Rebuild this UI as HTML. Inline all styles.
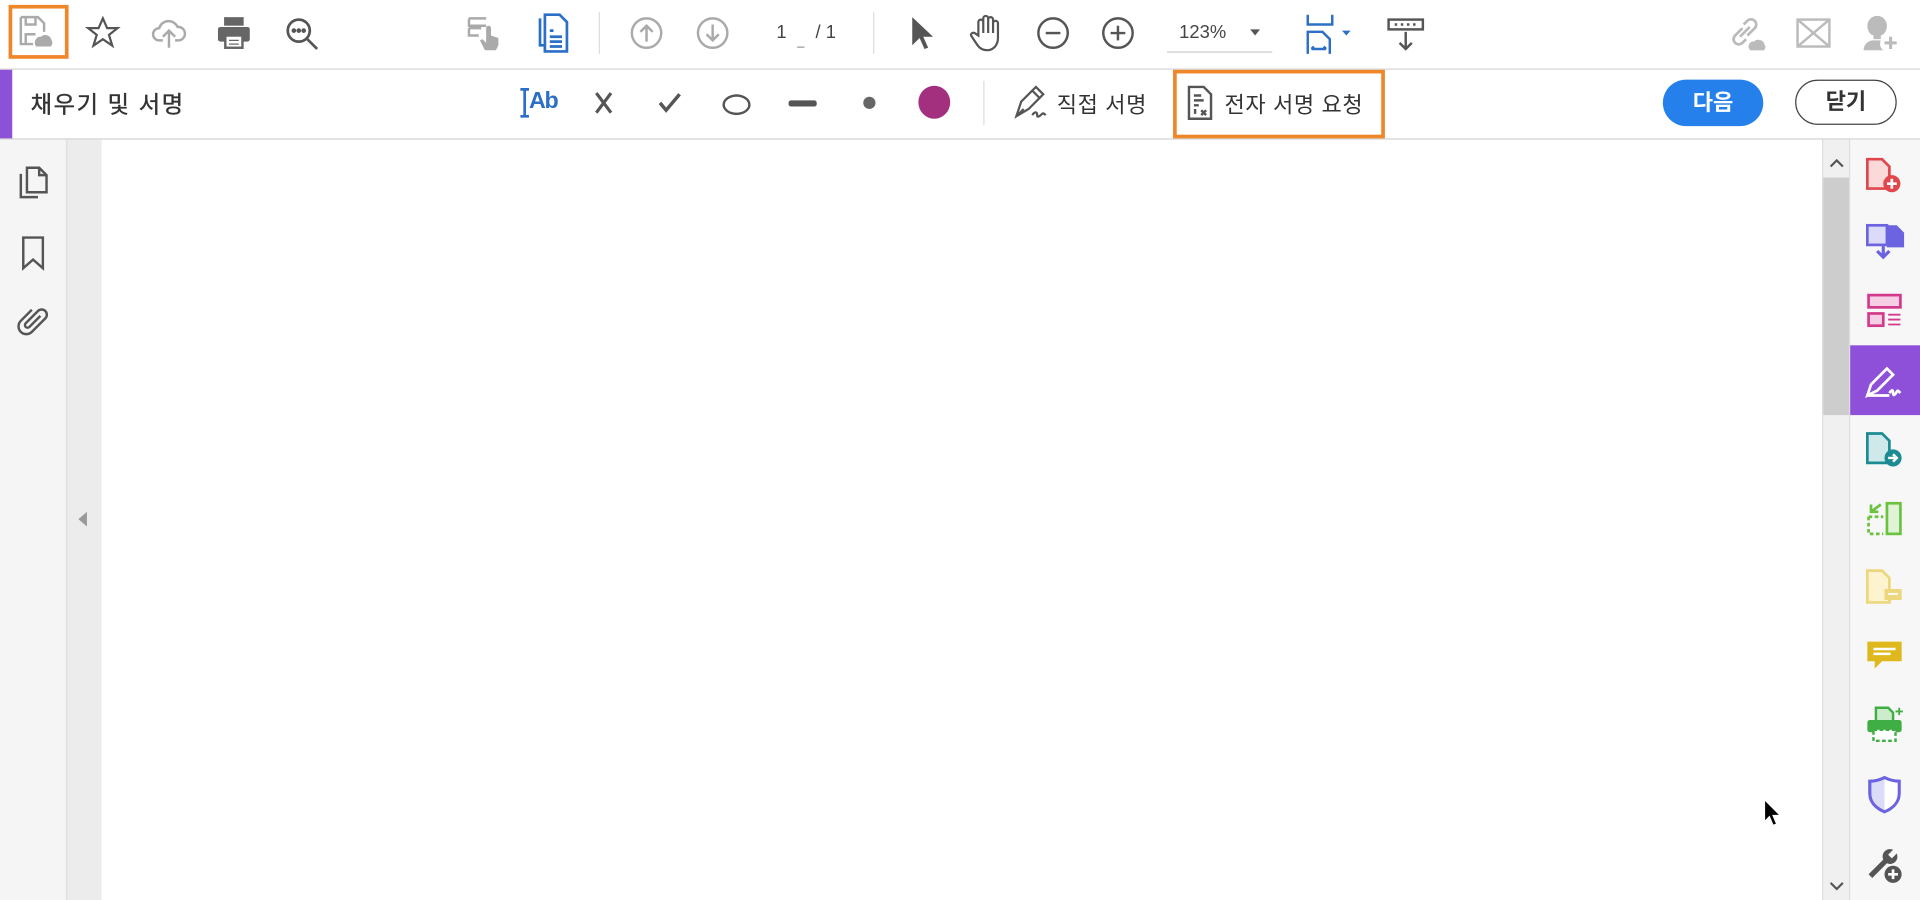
<!DOCTYPE html>
<html><head><meta charset="utf-8"><style>
html,body{margin:0;padding:0;width:1920px;height:899px;overflow:hidden;background:#fff;}
#w{position:absolute;left:0;top:0;width:1568px;height:735px;transform:scale(1.22449);transform-origin:0 0;font-family:"Liberation Sans","Noto Sans CJK KR",sans-serif;}
.a{position:absolute;}
svg{position:absolute;overflow:visible;}
.t{font-size:18px;color:#333;}
</style></head><body><div id="w">
<!-- top toolbar -->
<div class="a" style="left:0;top:0;width:1568px;height:56px;background:#fff;border-bottom:1px solid #d0d0d0"></div>
<div class="a" style="left:7px;top:4px;width:43px;height:38px;border:3px solid #f0862a"></div>
<svg style="left:15px;top:12px" width="30" height="30" viewBox="0 0 30 30" fill="none" stroke="#aaa" stroke-width="2"><path d="M2 2h14l5 5v7M2 2v22h10M6 2v6h8V2M6 24v-8h8"/><path d="M15 25a4 4 0 0 1 4-6a4 4 0 0 1 7 2a3 3 0 0 1 0 4z" fill="#aaa"/></svg>
<svg style="left:70px;top:13px" width="28" height="28" viewBox="0 0 28 28" fill="none" stroke="#555" stroke-width="1.8"><path d="M14 2l3.5 8h8.5l-7 5.5 2.7 8.8L14 19l-7.7 5.3 2.7-8.8-7-5.5h8.5z"/></svg>
<svg style="left:124px;top:13px" width="28" height="28" viewBox="0 0 28 28" fill="none" stroke="#aaa" stroke-width="2"><path d="M9 20H6a5 5 0 0 1 0-10a8 8 0 0 1 15-1a5 5 0 0 1 1 11h-3M14 26V12M9 17l5-5 5 5"/></svg>
<svg style="left:177px;top:13px" width="28" height="28" viewBox="0 0 28 28"><rect x="6" y="1" width="16" height="7" fill="#666"/><rect x="1" y="9" width="26" height="12" rx="2" fill="#666"/><rect x="7" y="16" width="14" height="10" fill="#fff" stroke="#666" stroke-width="2"/><path d="M10 20h8M10 23h8" stroke="#666"/></svg>
<svg style="left:232px;top:13px" width="30" height="30" viewBox="0 0 30 30" fill="none" stroke="#555" stroke-width="2.2"><circle cx="12" cy="12" r="9"/><path d="M19 19l8 8"/><circle cx="8" cy="12" r=".8" fill="#555"/><circle cx="12" cy="12" r=".8" fill="#555"/><circle cx="16" cy="12" r=".8" fill="#555"/></svg>
<svg style="left:380px;top:11px" width="32" height="32" viewBox="0 0 32 32" fill="none" stroke="#aaa" stroke-width="2"><path d="M3 4h14M3 4v6h14M3 12h10M3 12v6h8"/><path d="M16 30l-4-8 2-1 3 3V12a2 2 0 0 1 4 0v6l6 2v6l-2 4z" fill="#aaa" stroke="none"/></svg>
<svg style="left:437px;top:11px" width="28" height="32" viewBox="0 0 28 32" fill="none" stroke="#2c6fc6" stroke-width="2.2"><path d="M4 4v22h3"/><path d="M8 1h12l6 6v24H8z" fill="#fff"/><path d="M12 14h3M12 19h10M12 23h10M12 27h10"/></svg>
<div class="a" style="left:489px;top:10px;width:1px;height:34px;background:#ddd"></div>
<svg style="left:514px;top:13px" width="28" height="28" viewBox="0 0 28 28" fill="none" stroke="#aaa" stroke-width="2"><circle cx="14" cy="14" r="12"/><path d="M14 21V8M9 13l5-5 5 5"/></svg>
<svg style="left:568px;top:13px" width="28" height="28" viewBox="0 0 28 28" fill="none" stroke="#aaa" stroke-width="2"><circle cx="14" cy="14" r="12"/><path d="M14 7v13M9 15l5 5 5-5"/></svg>
<div class="a" style="left:634px;top:18px;font-size:15px;color:#444;">1</div>
<div class="a" style="left:651px;top:38px;width:6px;height:1px;background:#999"></div>
<div class="a" style="left:666px;top:18px;font-size:15px;color:#444;">/ 1</div>
<div class="a" style="left:713px;top:10px;width:1px;height:34px;background:#ddd"></div>
<svg style="left:742px;top:13px" width="22" height="28" viewBox="0 0 22 28"><path d="M3 1v23l6-6 4 9 3-1-4-9h8z" fill="#555"/></svg>
<svg style="left:791px;top:11px" width="30" height="32" viewBox="0 0 30 32" fill="none" stroke="#555" stroke-width="1.8"><path d="M8 18V7a2 2 0 0 1 4 0v9V4a2 2 0 0 1 4 0v12V5a2 2 0 0 1 4 0v11V8a2 2 0 0 1 4 0v12c0 6-4 10-9 10s-7-3-9-6l-4-6a2 2 0 0 1 3-2z"/></svg>
<svg style="left:846px;top:13px" width="28" height="28" viewBox="0 0 28 28" fill="none" stroke="#555" stroke-width="2"><circle cx="14" cy="14" r="12"/><path d="M8 14h12"/></svg>
<svg style="left:899px;top:13px" width="28" height="28" viewBox="0 0 28 28" fill="none" stroke="#555" stroke-width="2"><circle cx="14" cy="14" r="12"/><path d="M8 14h12M14 8v12"/></svg>
<div class="a" style="left:963px;top:18px;font-size:15px;color:#444;">123%</div>
<svg style="left:1021px;top:24px" width="8" height="6"><path d="M0 0h8L4 5z" fill="#555"/></svg>
<div class="a" style="left:953px;top:42px;width:86px;height:1px;background:#ccc"></div>
<svg style="left:1066px;top:11px" width="40" height="34" viewBox="0 0 40 34" fill="none" stroke="#2c6fc6" stroke-width="2"><path d="M2 1v8h20V1M2 33V15h12l6 6v12"/><path d="M5 29h12M5 29l2-2M17 29l-2-2"/><path d="M30 14h7l-3.5 4z" fill="#2c6fc6" stroke="none"/></svg>
<svg style="left:1133px;top:13px" width="30" height="30" viewBox="0 0 30 30" fill="none" stroke="#555" stroke-width="2"><rect x="1" y="3" width="28" height="8"/><path d="M15 13v14M10 22l5 5 5-5"/><path d="M6 7h2M11 7h2M16 7h2M21 7h2"/></svg>
<svg style="left:1411px;top:13px" width="32" height="28" viewBox="0 0 32 28" fill="none" stroke="#bbb" stroke-width="2.2"><path d="M12 10l-6 6a4 4 0 0 0 6 6l3-3M16 16l6-6a4 4 0 0 0-6-6l-3 3M10 17l8-8"/><path d="M19 27a3 3 0 0 1 3-5a4 4 0 0 1 7 2a2 2 0 0 1 0 3z" fill="#bbb"/></svg>
<svg style="left:1467px;top:15px" width="28" height="24" viewBox="0 0 28 24" fill="none" stroke="#bbb" stroke-width="2"><rect x="1" y="1" width="26" height="22"/><path d="M1 1l26 22M27 1L1 23"/></svg>
<svg style="left:1521px;top:12px" width="30" height="30" viewBox="0 0 30 30"><path d="M12 1a8 8 0 0 1 8 8c0 4-2 7-5 8v3H9v-3c-3-1-5-4-5-8a8 8 0 0 1 8-8zM1 29c0-5 4-8 8-8h6c-1 2-1 6 2 8z" fill="#bbb"/><path d="M23 18v10M18 23h10" stroke="#bbb" stroke-width="2.5"/></svg>
<!-- second toolbar -->
<div class="a" style="left:0;top:57px;width:1568px;height:56px;background:#fff;border-bottom:1px solid #d0d0d0"></div>
<div class="a" style="left:0;top:57px;width:10px;height:56px;background:#8b51d6"></div>
<div class="a" style="left:25px;top:71px;font-size:19px;color:#333;letter-spacing:1.3px;-webkit-text-stroke:0.3px #333">채우기 및 서명</div>
<svg style="left:424px;top:72px" width="34" height="24" viewBox="0 0 34 24" fill="none" stroke="#2c6fc6" stroke-width="2.2"><path d="M1 1h7M1 23h7M4.5 1v22"/></svg>
<div class="a" style="left:432px;top:71px;font-size:19px;font-weight:bold;color:#2c6fc6;letter-spacing:-1px;line-height:24px">Ab</div>
<svg style="left:485px;top:75px" width="16" height="18" viewBox="0 0 16 18" stroke="#555" stroke-width="2.6" fill="none"><path d="M2 1l12 16M14 1L2 17"/></svg>
<svg style="left:537px;top:76px" width="20" height="16" viewBox="0 0 20 16" stroke="#555" stroke-width="2.8" fill="none"><path d="M2 8l5 6L18 1"/></svg>
<div class="a" style="left:590px;top:77px;width:19px;height:13px;border:2.4px solid #555;border-radius:50%"></div>
<div class="a" style="left:644px;top:82px;width:23px;height:5px;background:#555;border-radius:2px"></div>
<div class="a" style="left:705px;top:79px;width:10px;height:10px;background:#666;border-radius:50%"></div>
<div class="a" style="left:750px;top:70px;width:26px;height:27px;background:#a3307f;border-radius:50%"></div>
<div class="a" style="left:803px;top:66px;width:1px;height:36px;background:#ddd"></div>
<svg style="left:827px;top:70px" width="30" height="28" viewBox="0 0 30 28" fill="none" stroke="#555" stroke-width="1.8"><path d="M3 25l4-12 9-9 6 6-9 9zM3 25l6-6M16 4l3-3 6 6-3 3"/><path d="M16 24c2-3 4-3 4 0s3 0 4-1 2 0 3 1"/></svg>
<div class="a t" style="left:863px;top:72px;letter-spacing:.5px">직접 서명</div>
<div class="a" style="left:958px;top:57px;width:167px;height:50px;border:3px solid #f0862a"></div>
<svg style="left:969px;top:70px" width="22" height="28" viewBox="0 0 22 28" fill="none" stroke="#555" stroke-width="2"><path d="M2 1h12l6 6v20H2z"/><path d="M6 8h6M6 12h8M6 16h4M7 19v4M12 20l4 4M16 20l-4 4"/></svg>
<div class="a t" style="left:1000px;top:72px;letter-spacing:.5px">전자 서명 요청</div>
<div class="a" style="left:1358px;top:65px;width:82px;height:38px;background:#2680eb;border-radius:19px;color:#fff;font-size:18px;text-align:center;line-height:38px;font-weight:bold">다음</div>
<div class="a" style="left:1466px;top:65px;width:81px;height:35px;border:1.5px solid #444;border-radius:19px;color:#333;font-size:18px;text-align:center;line-height:35px;font-weight:bold">닫기</div>
<!-- left panel -->
<div class="a" style="left:0;top:114px;width:54px;height:621px;background:#f5f5f5"></div>
<div class="a" style="left:54px;top:114px;width:28px;height:621px;background:#ececec;border-left:1px solid #ddd"></div>
<svg style="left:64px;top:418px" width="8" height="12"><path d="M7 0v12L0 6z" fill="#999"/></svg>
<svg style="left:15px;top:135px" width="26" height="28" viewBox="0 0 26 28" fill="none" stroke="#555" stroke-width="2"><path d="M2 7v19h14"/><path d="M7 2h10l6 6v14H7z"/><path d="M17 2v6h6"/></svg>
<svg style="left:17px;top:193px" width="20" height="28" viewBox="0 0 20 28" fill="none" stroke="#555" stroke-width="2"><path d="M2 1h16v25l-8-7-8 7z"/></svg>
<svg style="left:13px;top:248px" width="28" height="28" viewBox="0 0 28 28" fill="none" stroke="#555" stroke-width="2"><path d="M20 10l-9 9a2 2 0 0 1-3-3l10-10a4 4 0 0 1 6 6L13 23a6 6 0 0 1-9-9l9-9"/></svg>
<!-- scrollbar -->
<div class="a" style="left:1488px;top:114px;width:22px;height:621px;background:#f0f0f0;border-left:1px solid #ddd"></div>
<div class="a" style="left:1489px;top:145px;width:21px;height:194px;background:#cdcdcd"></div>
<svg style="left:1494px;top:129px" width="12" height="8"><path d="M1 7l5-5 5 5" stroke="#555" stroke-width="1.8" fill="none"/></svg>
<svg style="left:1494px;top:720px" width="12" height="8"><path d="M1 1l5 5 5-5" stroke="#555" stroke-width="1.8" fill="none"/></svg>
<!-- right panel -->
<div class="a" style="left:1510px;top:114px;width:58px;height:621px;background:#f7f7f7;border-left:1px solid #ddd"></div>
<div class="a" style="left:1511px;top:282px;width:57px;height:57px;background:#8e4fd9"></div>
<svg style="left:1522px;top:128px" width="34" height="30" viewBox="0 0 34 30"><path d="M3 2h12l6 6v18H3z" fill="#fbd9d9" stroke="#e0464c" stroke-width="2.2"/><circle cx="23" cy="22" r="7" fill="#e0464c"/><path d="M23 18v8M19 22h8" stroke="#fff" stroke-width="2.2"/></svg>
<svg style="left:1522px;top:181px" width="34" height="32" viewBox="0 0 34 32"><rect x="3" y="3" width="16" height="16" fill="#dcdaf9" stroke="#6b63e0" stroke-width="2.2"/><path d="M19 3h8l6 6v12H19z" fill="#6b63e0"/><path d="M16 20v8M11 24l5 5 5-5" stroke="#6b63e0" stroke-width="2.6" fill="none"/></svg>
<svg style="left:1523px;top:239px" width="32" height="30" viewBox="0 0 32 30" fill="none" stroke="#d43a8b" stroke-width="2.2"><rect x="3" y="2" width="26" height="10" fill="#f6cfe4"/><rect x="3" y="17" width="12" height="10" fill="#f6cfe4"/><path d="M19 18h10M19 22h10M19 26h10" stroke-width="1.5"/></svg>
<svg style="left:1522px;top:297px" width="34" height="30" viewBox="0 0 34 30" fill="none" stroke="#fff" stroke-width="2.2"><path d="M3 26h18M3 26l3-9L19 4l5 5-13 13zM21 24c2-3 3-3 3 0s2 1 3-1 2 0 3 1"/></svg>
<svg style="left:1522px;top:352px" width="34" height="30" viewBox="0 0 34 30"><path d="M3 2h12l6 6v18H3z" fill="#cfe9ea" stroke="#1c8b93" stroke-width="2.2"/><circle cx="24" cy="22" r="7" fill="#1c8b93"/><path d="M20 22h7M24 19l3 3-3 3" stroke="#fff" stroke-width="2" fill="none"/></svg>
<svg style="left:1522px;top:408px" width="34" height="32" viewBox="0 0 34 32" fill="none" stroke="#6bc23f" stroke-width="2.2"><rect x="19" y="3" width="11" height="25" fill="#e1f3d6"/><path d="M4 14v14h12M4 14h12" stroke-dasharray="3 2"/><path d="M14 4l-8 6M6 4v6h6"/></svg>
<svg style="left:1522px;top:464px" width="34" height="32" viewBox="0 0 34 32"><path d="M3 2h12l6 6v20H3z" fill="#fdf3cf" stroke="#edd77c" stroke-width="2.2"/><path d="M17 17h14v9h-8l-3 3v-3h-3z" fill="#edd77c"/><path d="M20 21h8" stroke="#fff" stroke-width="1.5"/></svg>
<svg style="left:1523px;top:522px" width="32" height="30" viewBox="0 0 32 30"><path d="M2 2h28v16H14l-6 6v-6H2z" fill="#dfb81e"/><path d="M7 8h18M7 12h14" stroke="#fff" stroke-width="2"/></svg>
<svg style="left:1522px;top:576px" width="34" height="32" viewBox="0 0 34 32"><path d="M10 2h10l4 4v8H10z" fill="#cdeccc" stroke="#3fae45" stroke-width="2"/><rect x="3" y="12" width="28" height="10" rx="2" fill="#3fae45"/><rect x="8" y="20" width="18" height="9" fill="#fff" stroke="#3fae45" stroke-width="2" stroke-dasharray="3 2"/><path d="M29 2v6M26 5h6" stroke="#3fae45" stroke-width="1.5"/></svg>
<svg style="left:1524px;top:633px" width="30" height="32" viewBox="0 0 30 32"><path d="M15 2c4 2 8 3 12 3v10c0 7-5 12-12 15C8 27 3 22 3 15V5c4 0 8-1 12-3z" fill="#dcdbf8" stroke="#6b63e0" stroke-width="2.4"/><path d="M15 2v28c7-3 12-8 12-15V5c-4 0-8-1-12-3z" fill="#fff"/><path d="M15 2c4 2 8 3 12 3v10c0 7-5 12-12 15C8 27 3 22 3 15V5c4 0 8-1 12-3z" fill="none" stroke="#6b63e0" stroke-width="2.4"/></svg>
<svg style="left:1522px;top:690px" width="34" height="32" viewBox="0 0 34 32"><path d="M4 24L16 12a6 6 0 0 1 8-8l-4 4 3 3 4-4a6 6 0 0 1-8 8L7 27z" fill="#555"/><circle cx="24" cy="24" r="7" fill="#555"/><path d="M24 20v8M20 24h8" stroke="#fff" stroke-width="2.2"/></svg>
<!-- cursor -->
<svg style="left:1440px;top:652px" width="16" height="24" viewBox="0 0 16 24"><path d="M1 1v18l4-4 3 7 3-1-3-7h6z" fill="#000" stroke="#fff" stroke-width="1"/></svg>
</div></body></html>
